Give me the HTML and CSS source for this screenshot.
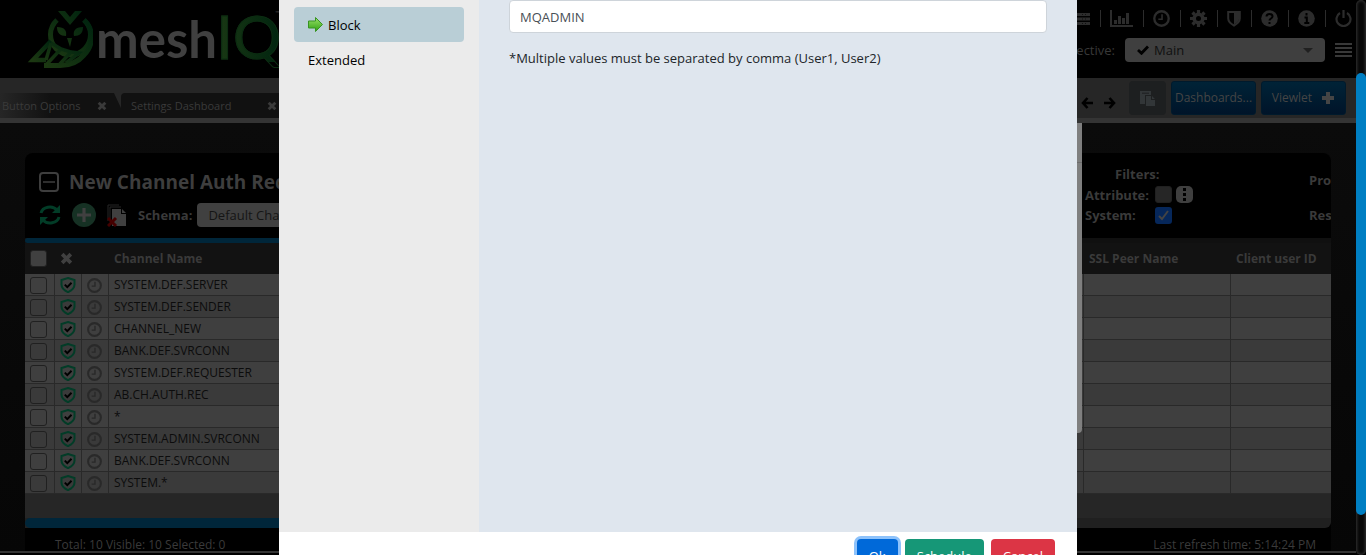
FILE: index.html
```html
<!DOCTYPE html>
<html lang="en">
<head>
<meta charset="utf-8">
<title>meshIQ</title>
<link rel="stylesheet" href="styles.css">
</head>
<body>
<svg class="defs" aria-hidden="true">
  <symbol id="shield-check" viewBox="0 0 16 16"><path d="M8 1 14.500 3v4.600c0 3.600-2.800 6-6.500 7.600-3.700-1.600-6.500-4-6.500-7.600V3z" fill="none" stroke="#023c27" stroke-width="2"/><path d="m4.800 7.600 2.500 2.500 4.200-4.300" fill="none" stroke="#000" stroke-width="2"/></symbol>
  <symbol id="clock" viewBox="0 0 16 16"><circle cx="8" cy="8" r="6.800" fill="none" stroke="currentColor" stroke-width="2.200"/><path d="M8.500 4v4.700H5" fill="none" stroke="currentColor" stroke-width="1.500"/></symbol>
  <symbol id="cross" viewBox="0 0 12 12"><path d="m2 2 8 8m0-8-8 8" stroke="currentColor" stroke-width="3.400"/></symbol>
</svg>
<div class="app">
  <header class="top">
    <a class="logo" href="#" aria-label="meshIQ">
      <svg class="owl" viewBox="0 0 66 60" width="66" height="60">
        <defs><linearGradient id="g" x1="0" y1="1" x2="1" y2="0"><stop offset="0" stop-color="#1c3812"/><stop offset="1" stop-color="#00240f"/></linearGradient></defs>
        <g fill="none" stroke="url(#g)">
          <path d="M30 10a20 20 0 1 0 27 0" stroke-width="5"/>
          <path d="M57 10c10 9 10 25 0 35-6 7-14 10.500-24 10.500H17" stroke-width="5"/>
          <path d="M24 31 6 50h13" stroke-width="4.500"/>
          <path d="M24 33 34 39 19 55M24 33l-5 17M34 39l10 3-12 13M44 42l8 1-13 10" stroke-width="3.500"/>
        </g>
        <path fill="url(#g)" d="M31 1h7l5 6 5-6h7L43 15zM30 17c8 0 10 4 9 9-6 0-9-3-9-9zm26 0c-8 0-10 4-9 9 6 0 9-3 9-9zM40 28h5l-2 9z"/>
      </svg>
      <span class="word">mesh</span><span class="iq">IQ</span><span class="tm">™</span>
    </a>
    <div class="tools">
      <nav class="icons">
        <button class="ic" aria-label="Servers"><svg width="19" height="12" viewBox="0 0 19 12"><path d="M0 1.500h19M0 6h19M0 10.500h19" stroke="currentColor" stroke-width="3"/><path d="M11 1.500h6M11 6h6M11 10.500h6" stroke="#111" stroke-dasharray="1 2"/></svg></button>
        <button class="ic" aria-label="Charts"><svg width="23" height="17" viewBox="0 0 23 17"><path d="M1 0v16h22" fill="none" stroke="currentColor" stroke-width="2"/><path d="M5.500 14v-4m4 4V6m4 8V8m4 6V3" stroke="currentColor" stroke-width="3"/></svg></button>
        <button class="ic" aria-label="Schedule"><svg width="17" height="17"><use href="#clock"/></svg></button>
        <button class="ic" aria-label="Settings"><svg width="17" height="17" viewBox="0 0 17 17"><circle cx="8.500" cy="8.500" r="4.300" fill="none" stroke="currentColor" stroke-width="3.600"/><path d="M8.500 0v3m0 11v3M0 8.500h3m11 0h3M2.500 2.500l2 2m8 8 2 2m0-12-2 2m-8 8-2 2" stroke="currentColor" stroke-width="3.200"/></svg></button>
        <button class="ic" aria-label="Security"><svg width="14" height="17" viewBox="0 0 14 17"><path d="M1.200 2h11.600v6.500c0 3.500-3 5.500-5.800 7-2.800-1.500-5.800-3.500-5.800-7z" fill="none" stroke="currentColor" stroke-width="2"/><path d="M7 2h5v7c0 2-2 4-5 5.500z" fill="currentColor"/></svg></button>
        <button class="ic" aria-label="Help"><svg width="17" height="17" viewBox="0 0 17 17"><circle cx="8.500" cy="8.500" r="8.300" fill="currentColor"/><path d="M5.500 6.500c0-3.500 6-3.500 6 0 0 2-3 2-3 4M8.500 12v2" fill="none" stroke="#000" stroke-width="2"/></svg></button>
        <button class="ic" aria-label="Information"><svg width="17" height="17" viewBox="0 0 17 17"><circle cx="8.500" cy="8.500" r="8.300" fill="currentColor"/><path d="M8.500 3v2.500M6.500 7.500h2.300V13M6.300 13h5" fill="none" stroke="#000" stroke-width="2"/></svg></button>
        <button class="ic" aria-label="Sign out"><svg width="17" height="17" viewBox="0 0 17 17"><path d="M5 3a7 7 0 1 0 7 0M8.500 0v8" fill="none" stroke="currentColor" stroke-width="2.200"/></svg></button>
      </nav>
      <div class="persp">
        <span>Perspective:</span>
        <button class="pick"><svg width="12" height="10" viewBox="0 0 12 10"><path d="m1 5 3.500 3.300L11 1.500" fill="none" stroke="currentColor" stroke-width="2.800"/></svg><span>Main</span><svg class="caret" width="10" height="5" viewBox="0 0 10 5"><path d="M0 0h10L5 5z" fill="#202020"/></svg></button>
        <button class="burger" aria-label="Menu"><svg width="17" height="15" viewBox="0 0 17 15"><path d="M0 1h17M0 5h17M0 9h17M0 13h17" stroke="currentColor" stroke-width="2"/></svg></button>
      </div>
    </div>
  </header>
  <div class="bar">
    <div class="tabs">
      <div class="tab first"><span>Button Options</span><svg width="10" height="10"><use href="#cross"/></svg></div>
      <div class="tab second"><span>Settings Dashboard</span><svg width="10" height="10"><use href="#cross"/></svg></div>
    </div>
    <div class="actions">
      <button class="arrow" aria-label="Previous"><svg width="12" height="12" viewBox="0 0 12 12"><path d="M6.500 1 2 6l4.500 5M2 6h10" fill="none" stroke="currentColor" stroke-width="2.600"/></svg></button>
      <button class="arrow" aria-label="Next"><svg width="12" height="12" viewBox="0 0 12 12"><path d="M5.500 1 10 6l-4.500 5M10 6H0" fill="none" stroke="currentColor" stroke-width="2.600"/></svg></button>
      <button class="paste" aria-label="Paste"><svg width="15" height="15" viewBox="0 0 15 15"><path d="M0 0h11v4H5v9H0z" fill="currentColor"/><path d="M6 5h5v4h4v6H6zM12 5l3 3h-3z" fill="currentColor"/><path d="M2 2.200h7" stroke="#1d1f20"/></svg></button>
      <button class="blue">Dashboards...</button>
      <button class="blue"><span>Viewlet</span><svg width="14" height="14" viewBox="0 0 14 14"><path d="M7 1v12M1 7h12" stroke="currentColor" stroke-width="4"/></svg></button>
    </div>
  </div>
  <main class="main">
    <section class="panel">
      <div class="head">
        <div class="left">
          <h1><svg width="20" height="20" viewBox="0 0 20 20"><rect x="1" y="1" width="18" height="18" rx="3" fill="none" stroke="currentColor" stroke-width="2"/><path d="M4 10h12" stroke="currentColor" stroke-width="1.500"/></svg><span>New Channel Auth Records</span></h1>
          <div class="schema">
            <svg width="22" height="22" viewBox="0 0 22 22"><path d="M2 9a9 7.500 0 0 1 16-3M20 13a9 7.500 0 0 1-16 3" fill="none" stroke="#023c27" stroke-width="3"/><path d="M21 1v8h-8zM1 21v-8h8z" fill="#023c27"/></svg>
            <svg width="24" height="24" viewBox="0 0 24 24"><circle cx="12" cy="12" r="12" fill="#163124"/><path d="M12 5v14M5 12h14" stroke="#404040" stroke-width="3.200"/></svg>
            <svg width="20" height="23" viewBox="0 0 20 23"><path d="M1 17V1h11M3 17V3h11" fill="none" stroke="#262626"/><path d="M5 5h9v5h5v12H5z" fill="#404040"/><path d="m15 5 4 4h-4z" fill="#404040"/><path d="m1 14 8 8m0-8-8 8" stroke="#450000" stroke-width="3"/></svg>
            <label for="schema">Schema:</label>
            <select id="schema"><option>Default Channel Auth</option></select>
          </div>
        </div>
        <div class="filters">
          <span class="ftitle">Filters:</span>
          <label for="attr">Attribute:</label><input id="attr" type="checkbox" class="box gray"><button class="kebab" aria-label="More"><svg width="5" height="13" viewBox="0 0 5 13"><path d="M1 0h3v3H1zm0 5h3v3H1zm0 5h3v3H1z" fill="#000"/></svg></button>
          <label for="sys">System:</label><input id="sys" type="checkbox" class="box on" checked>
        </div>
        <div class="more"><span>Pro</span><span>Res</span></div>
      </div>
      <div class="strip"><div class="thumb"></div></div>
      <table>
        <colgroup><col class="c1"><col class="c2"><col class="c2"><col><col class="c4"><col class="c5"></colgroup>
        <thead><tr><th><input type="checkbox" class="box all" aria-label="Select all"></th><th><svg class="x" width="13" height="13"><use href="#cross"/></svg></th><th></th><th>Channel Name</th><th>SSL Peer Name</th><th>Client user ID</th></tr></thead>
        <tbody>
          <tr><td><input type="checkbox" class="box" aria-label="Select row"></td><td><svg class="sh"><use href="#shield-check"/></svg></td><td><svg class="ck"><use href="#clock"/></svg></td><td>SYSTEM.DEF.SERVER</td><td></td><td></td></tr>
          <tr><td><input type="checkbox" class="box" aria-label="Select row"></td><td><svg class="sh"><use href="#shield-check"/></svg></td><td><svg class="ck"><use href="#clock"/></svg></td><td>SYSTEM.DEF.SENDER</td><td></td><td></td></tr>
          <tr><td><input type="checkbox" class="box" aria-label="Select row"></td><td><svg class="sh"><use href="#shield-check"/></svg></td><td><svg class="ck"><use href="#clock"/></svg></td><td>CHANNEL_NEW</td><td></td><td></td></tr>
          <tr><td><input type="checkbox" class="box" aria-label="Select row"></td><td><svg class="sh"><use href="#shield-check"/></svg></td><td><svg class="ck"><use href="#clock"/></svg></td><td>BANK.DEF.SVRCONN</td><td></td><td></td></tr>
          <tr><td><input type="checkbox" class="box" aria-label="Select row"></td><td><svg class="sh"><use href="#shield-check"/></svg></td><td><svg class="ck"><use href="#clock"/></svg></td><td>SYSTEM.DEF.REQUESTER</td><td></td><td></td></tr>
          <tr><td><input type="checkbox" class="box" aria-label="Select row"></td><td><svg class="sh"><use href="#shield-check"/></svg></td><td><svg class="ck"><use href="#clock"/></svg></td><td>AB.CH.AUTH.REC</td><td></td><td></td></tr>
          <tr><td><input type="checkbox" class="box" aria-label="Select row"></td><td><svg class="sh"><use href="#shield-check"/></svg></td><td><svg class="ck"><use href="#clock"/></svg></td><td>*</td><td></td><td></td></tr>
          <tr><td><input type="checkbox" class="box" aria-label="Select row"></td><td><svg class="sh"><use href="#shield-check"/></svg></td><td><svg class="ck"><use href="#clock"/></svg></td><td>SYSTEM.ADMIN.SVRCONN</td><td></td><td></td></tr>
          <tr><td><input type="checkbox" class="box" aria-label="Select row"></td><td><svg class="sh"><use href="#shield-check"/></svg></td><td><svg class="ck"><use href="#clock"/></svg></td><td>BANK.DEF.SVRCONN</td><td></td><td></td></tr>
          <tr><td><input type="checkbox" class="box" aria-label="Select row"></td><td><svg class="sh"><use href="#shield-check"/></svg></td><td><svg class="ck"><use href="#clock"/></svg></td><td>SYSTEM.*</td><td></td><td></td></tr>
        </tbody>
      </table>
      <div class="pad"></div>
      <div class="strip low"><div class="thumb"></div></div>
      <footer class="foot"><span>Total: 10 Visible: 10 Selected: 0</span><span>Last refresh time: 5:14:24 PM</span></footer>
    </section>
  </main>
</div>
<div class="under"><div class="underhead"></div></div>
<div class="modal" role="dialog" aria-label="Block">
  <div class="mbody">
    <nav class="side">
      <a class="item active" href="#"><svg width="15" height="15" viewBox="0 0 15 15"><defs><linearGradient id="ar" x1="0" y1="0" x2="0" y2="1"><stop offset="0" stop-color="#9be26a"/><stop offset="1" stop-color="#2ea010"/></linearGradient></defs><path d="M.500 4h7V.500L14.500 7.500l-7 7V11h-7z" fill="url(#ar)" stroke="#379322"/></svg><span>Block</span></a>
      <a class="item" href="#"><span>Extended</span></a>
    </nav>
    <div class="form">
      <input type="text" class="users" value="MQADMIN" aria-label="Users">
      <p>*Multiple values must be separated by comma (User1, User2)</p>
    </div>
  </div>
  <div class="mfoot">
    <button class="btn ok">Ok</button><button class="btn sched">Schedule</button><button class="btn cancel">Cancel</button>
  </div>
</div>
<div class="scroll"><div class="sthumb"></div></div>
</body>
</html>
```
FILE: styles.css
```css
* { box-sizing: border-box; }
html, body { height: 100%; overflow: hidden; }
body { margin: 0; background: #000; font-family: "Open Sans", "Noto Sans", sans-serif; font-size: 13px; line-height: 20px; color: #404040; }
button { font: inherit; color: inherit; background: none; border: 0; padding: 0; display: flex; align-items: center; justify-content: center; }
svg { display: block; flex: none; }
.defs { position: absolute; width: 0; height: 0; }
.app { height: 553px; max-height: 100%; margin-right: 10px; overflow: hidden; border-bottom: 2px solid #343434; }

.top { height: 78px; display: flex; justify-content: space-between; background: #000; }
.logo { display: flex; align-items: flex-start; padding: 10px 0 0 27px; text-decoration: none; color: #404040; font-family: Lato, sans-serif; }
.word { font-size: 51px; line-height: 58px; font-weight: 700; padding-left: 3px; }
.iq { margin-left: -1px; font-size: 60px; line-height: 52px; background: linear-gradient(90deg, #1a3814, #00240f); -webkit-background-clip: text; background-clip: text; color: transparent; -webkit-text-stroke: 1px #0c2c12; }
.tm { margin-left: -6px; font-size: 6px; line-height: 6px; }
.tools { padding: 9px 4px 0 0; display: flex; flex-direction: column; gap: 10px; color: #2c2c2c; }
.icons { display: flex; justify-content: flex-end; align-items: center; height: 19px; }
.ic { padding: 0 10px 0 9px; height: 17px; border-right: 1px solid #2c2c2c; }
.ic:last-child { border: 0; padding-right: 0; }
.persp { display: flex; align-items: center; justify-content: flex-end; color: #383838; height: 24px; }
.pick { width: 200px; height: 24px; margin: 0 10px; padding: 0 12px; gap: 5px; border-radius: 4px; background: #3f3f3f; color: #000; }
.pick span { color: #101010; }
.caret { margin-left: auto; }

.bar { height: 45px; background: #262626; border-bottom: 5px solid #343434; display: flex; justify-content: space-between; }
.tabs { display: flex; align-items: flex-end; font-size: 11px; }
.tab { height: 25px; display: flex; align-items: center; justify-content: space-between; background: #111; color: #3a3a3a; }
.first { width: 121px; padding: 0 14px 0 2px; background: linear-gradient(90deg, #262626, #111 50px); clip-path: polygon(0 0, 114px 0, 121px 15px, 121px 25px, 0 25px); }
.second { width: 165px; padding: 0 9px 0 10px; border-top-left-radius: 4px; }
.actions { display: flex; align-items: center; gap: 5px; padding-right: 10px; color: #3a3a3a; }
.arrow { width: 18px; color: #000; padding-top: 9px; }
.paste { width: 37px; height: 34px; margin-left: 5px; border-radius: 4px; background: #1d1f20; color: #323638; }
.blue { width: 85px; height: 34px; gap: 9px; border: 1px solid #001a2c; border-radius: 3px; background: linear-gradient(#002337, #001429); font-size: 12px; color: #454545; white-space: nowrap; }

.main { padding: 30px 25px 0; background: linear-gradient(#0b0b0b, #060606); }
.panel { border-radius: 8px 8px 0 0; overflow: hidden; background: #000; }
.head { height: 85px; display: flex; font-weight: 700; overflow: hidden; color: #3a3a3a; }
.left { flex: 1; padding: 18px 0 0 14px; }
h1 { margin: 0; display: flex; align-items: center; gap: 10px; font-size: 19px; line-height: 22px; color: #3e3e3e; }
.schema { display: flex; align-items: center; gap: 11px; margin-top: 10px; }
.schema select { height: 24px; width: 220px; margin-left: -6px; padding: 0 7px; border: 0; border-radius: 4px; background: #404040; color: #151515; font: inherit; font-weight: 400; }
.filters { width: 224px; padding-top: 11px; display: grid; grid-template-columns: 66px 17px 17px; grid-template-rows: 20px 21px 20px; column-gap: 4px; align-items: center; }
.ftitle { grid-column: 1 / -1; padding-left: 30px; }
.kebab { width: 17px; height: 17px; border-radius: 5px; background: #3f3f3f; }
.more { width: 22px; padding-top: 17px; display: flex; flex-direction: column; gap: 15px; overflow: hidden; }
.box { appearance: none; display: block; width: 17px; height: 17px; margin: 0; border: 1px solid #202020; border-radius: 3px; }
.gray { background: #262626; }
.on { border: 0; background: #06275a url("data:image/svg+xml,%3Csvg xmlns='http://www.w3.org/2000/svg' viewBox='0 0 17 17'%3E%3Cpath d='m4 9 3 3 6-8' fill='none' stroke='%23444' stroke-width='2'/%3E%3C/svg%3E"); }
.all { background: #404040; }
.strip { height: 5px; background: #101010; }
.thumb { width: 60%; height: 100%; border-radius: 5px; background: #00263a; }
.low { height: 10px; background: #202020; border-radius: 0 0 6px 0; }
table { width: 100%; table-layout: fixed; border-collapse: separate; border-spacing: 0; font-size: 12px; }
.c1 { width: 30px; } .c2 { width: 27px; } .c4 { width: 147px; } .c5 { width: 100px; }
th { height: 31px; padding: 0 5px; background: #121212; color: #3a3a3a; text-align: left; }
td { height: 22px; padding: 1px 5px 0; line-height: 20px; border-right: 1px solid #292929; border-bottom: 1px solid #292929; background: #3f3f3f; color: #0c0c0c; }
tbody tr:nth-child(even) td { background: #3a3a3a; }
td:last-child { border-right: 0; }
.x { color: #404040; }
.sh { width: 16px; height: 16px; }
.ck { width: 15px; height: 15px; color: #292929; }
.pad { height: 24px; background: #262626; }
.foot { display: flex; justify-content: space-between; padding: 7px 15px 0 30px; font-size: 12px; color: #3a3a3a; }

.under { position: absolute; top: 123px; left: 284px; right: 284px; height: 310px; background: #7f7f7f; border-radius: 0 0 4px 4px; }
.underhead { height: 40px; border-bottom: 1px solid #6c6c6c; }
.modal { position: absolute; top: 0; left: 279px; right: 289px; background: #fff; color: #212529; }
.mbody { display: flex; min-height: 532px; }
.side { width: 200px; padding: 7px 15px; background: #ebebeb; }
.item { display: flex; align-items: center; gap: 5px; height: 35px; padding: 0 14px; border-radius: 4px; color: #000; text-decoration: none; }
.active { background: #b9ced6; }
.form { flex: 1; padding: 0 30px; background: #dfe6ee; }
.users { display: block; width: 100%; height: 33px; padding: 0 10px; border: 1px solid #ced4da; border-radius: 4px; background: #fff; color: #495057; font: inherit; }
p { margin: 15px 0 0; }
.mfoot { display: flex; justify-content: flex-end; gap: 7px; padding: 7px 22px; }
.btn { height: 33px; padding: 0 12px; border-radius: 4px; color: #fff; }
.ok { background: #0069d9; box-shadow: 0 0 0 3px #8dc2fb; }
.sched { background: #169777; }
.cancel { background: #dc3545; }
.scroll { position: absolute; top: 0; right: 0; bottom: 0; width: 10px; padding-top: 73px; border-radius: 5px; background: #080808; box-shadow: inset 0 0 3px 1px #333; }
.sthumb { height: 442px; border-radius: 5px; background: #007fc3; }
```
